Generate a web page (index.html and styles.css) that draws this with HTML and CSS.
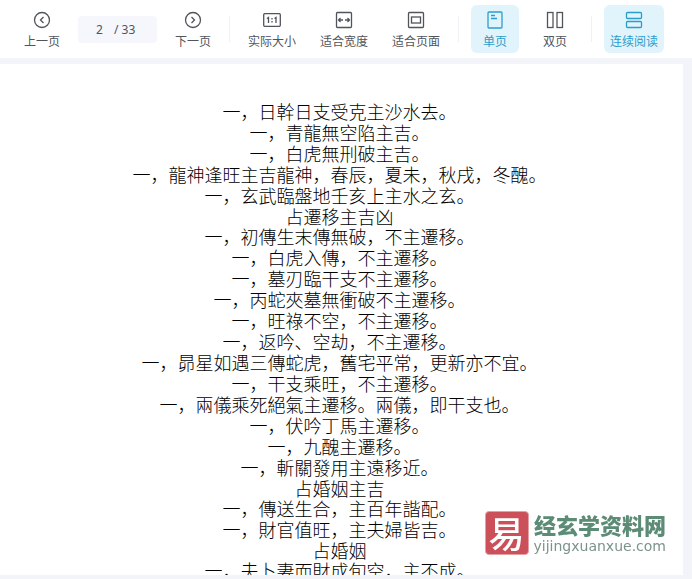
FILE: index.html
```html
<!DOCTYPE html>
<html lang="zh-CN">
<head>
    <meta charset="UTF-8">
    <meta name="viewport" content="width=device-width, initial-scale=1.0">
    <title>文档阅读</title>
    <link rel="stylesheet" href="styles.css">
</head>
<body>

    <header class="toolbar">
        <button type="button" class="tool">
            <svg class="icon" viewBox="0 0 18 18"><circle cx="9" cy="9" r="7.5"/><path d="M10.5 6 7.5 9l3 3"/></svg>
            上一页
        </button>
        <div class="pager">
            <input type="text" class="pager-input" value="2" aria-label="页码">
            <span>/ 33</span>
        </div>
        <button type="button" class="tool">
            <svg class="icon" viewBox="0 0 18 18"><circle cx="9" cy="9" r="7.5"/><path d="m7.5 6 3 3-3 3"/></svg>
            下一页
        </button>
        <span class="separator"></span>
        <button type="button" class="tool">
            <svg class="icon" viewBox="0 0 18 18"><rect x=".7" y="2.700" width="16.6" height="12.600" rx="1"/><path d="m4 7.500 1.500-1v5.500M11.500 7.500l1.500-1v5.500M9 7v1.500M9 10v1.500"/></svg>
            实际大小
        </button>
        <button type="button" class="tool">
            <svg class="icon" viewBox="0 0 18 18"><rect x="1.5" y="1.5" width="15" height="15" rx="1"/><path d="M3.5 9H8M10 9h4.5M5.5 7l-2 2 2 2M12.5 7l2 2-2 2"/></svg>
            适合宽度
        </button>
        <button type="button" class="tool">
            <svg class="icon" viewBox="0 0 18 18"><rect x="1.5" y="1.5" width="15" height="15" rx="1"/><rect x="4.5" y="6" width="9" height="6"/></svg>
            适合页面
        </button>
        <span class="separator"></span>
        <button type="button" class="tool active">
            <svg class="icon" viewBox="0 0 18 18"><rect x="2" y="1" width="14" height="16" rx="1"/><path d="M5 4.5h4M5 7.5h6"/></svg>
            单页
        </button>
        <button type="button" class="tool">
            <svg class="icon" viewBox="0 0 18 18"><rect x="1.5" y="1.5" width="5.5" height="15"/><rect x="11" y="1.5" width="5.5" height="15"/></svg>
            双页
        </button>
        <span class="separator"></span>
        <button type="button" class="tool active">
            <svg class="icon" viewBox="0 0 18 18"><rect x="1.5" y="1.5" width="15" height="6" rx="1"/><rect x="1.5" y="10.5" width="15" height="6" rx="1"/></svg>
            连续阅读
        </button>
    </header>

    <main class="viewer">
        <article class="sheet">
            <p>一，日幹日支受克主沙水去。</p>
            <p>一，青龍無空陷主吉。</p>
            <p>一，白虎無刑破主吉。</p>
            <p>一，龍神逢旺主吉龍神，春辰，夏未，秋戌，冬醜。</p>
            <p>一，玄武臨盤地壬亥上主水之玄。</p>
            <h2>占遷移主吉凶</h2>
            <p>一，初傳生末傳無破，不主遷移。</p>
            <p>一，白虎入傳，不主遷移。</p>
            <p>一，墓刃臨干支不主遷移。</p>
            <p>一，丙蛇夾墓無衝破不主遷移。</p>
            <p>一，旺祿不空，不主遷移。</p>
            <p>一，返吟、空劫，不主遷移。</p>
            <p>一，昴星如遇三傳蛇虎，舊宅平常，更新亦不宜。</p>
            <p>一，干支乘旺，不主遷移。</p>
            <p>一，兩儀乘死絕氣主遷移。兩儀，即干支也。</p>
            <p>一，伏吟丁馬主遷移。</p>
            <p>一，九醜主遷移。</p>
            <p>一，斬關發用主遠移近。</p>
            <h2>占婚姻主吉</h2>
            <p>一，傳送生合，主百年諧配。</p>
            <p>一，財官值旺，主夫婦皆吉。</p>
            <h2>占婚姻</h2>
            <p>一，夫卜妻而財成旬空，主不成。</p>
        </article>
    </main>

    <div class="watermark">
        <span class="seal">易</span>
        <div class="brand">
            <strong class="brand-name">经玄学资料网</strong>
            <span class="brand-url">yijingxuanxue.com</span>
        </div>
    </div>

</body>
</html>
```
FILE: styles.css
```css
* {
    box-sizing: border-box;
}

body {
    margin: 0;
    height: 100vh;
    display: flex;
    flex-direction: column;
    background-color: #f2f4fa;
    font-family: "Noto Sans CJK SC", sans-serif;
    overflow: hidden;
}

/* Toolbar */
.toolbar {
    display: flex;
    align-items: flex-start;
    gap: 12px;
    padding: 5px 18px;
    background-color: #fff;
}

.tool {
    flex: none;
    display: flex;
    flex-direction: column;
    align-items: center;
    justify-content: flex-start;
    gap: 3px;
    min-width: 48px;
    height: 48px;
    padding: 6px 6px 0;
    border: none;
    border-radius: 6px;
    background: none;
    color: #50555c;
    font-family: inherit;
    font-size: 12px;
    line-height: 18px;
    white-space: nowrap;
    cursor: pointer;
}

.tool.active {
    background-color: #e1f4fc;
    color: #2b9dcb;
}

.icon {
    flex: none;
    width: 18px;
    height: 18px;
    fill: none;
    stroke: currentColor;
    stroke-width: 1.3;
}

.pager {
    flex: none;
    display: flex;
    align-items: center;
    gap: 8px;
    width: 79px;
    height: 27px;
    margin-top: 11px;
    padding-left: 18px;
    border-radius: 4px;
    background-color: #f5f7fc;
    color: #50555c;
    font-family: "Noto Sans", sans-serif;
    font-size: 12px;
}

.pager-input {
    width: 10px;
    padding: 0;
    border: none;
    background: none;
    color: inherit;
    font: inherit;
}

.separator {
    flex: none;
    width: 1px;
    height: 26px;
    margin-top: 11px;
    background-color: #eff1f5;
}

/* Document */
.viewer {
    flex: 1;
    min-height: 0;
    display: flex;
    padding: 6px 9px 4px 0;
}

.sheet {
    flex: 1;
    overflow: hidden;
    padding: 37px 4px 0 0;
    background-color: #fff;
    color: #000;
    font-size: 18px;
    font-weight: 300;
    line-height: 21px;
    text-align: center;
}

.sheet p,
.sheet h2 {
    margin: 0;
}

.sheet h2 {
    font-size: 18px;
    font-weight: 300;
    line-height: 20px;
}

/* Watermark */
.watermark {
    position: fixed;
    right: 26px;
    bottom: 24px;
    display: flex;
    align-items: center;
    gap: 5px;
}

.seal {
    width: 44px;
    height: 44px;
    border: 1px solid #e3a0a5;
    border-radius: 4px;
    background-color: #cb5059;
    color: #fff;
    font-size: 36px;
    font-weight: 500;
    line-height: 40px;
    text-align: center;
}

.brand {
    display: flex;
    flex-direction: column;
    align-items: flex-end;
}

.brand-name {
    color: #5c8b76;
    font-size: 22px;
    font-weight: 900;
    line-height: 26px;
}

.brand-url {
    color: #7c9389;
    font-family: "DejaVu Sans", sans-serif;
    font-size: 14px;
    line-height: 18px;
}
```
